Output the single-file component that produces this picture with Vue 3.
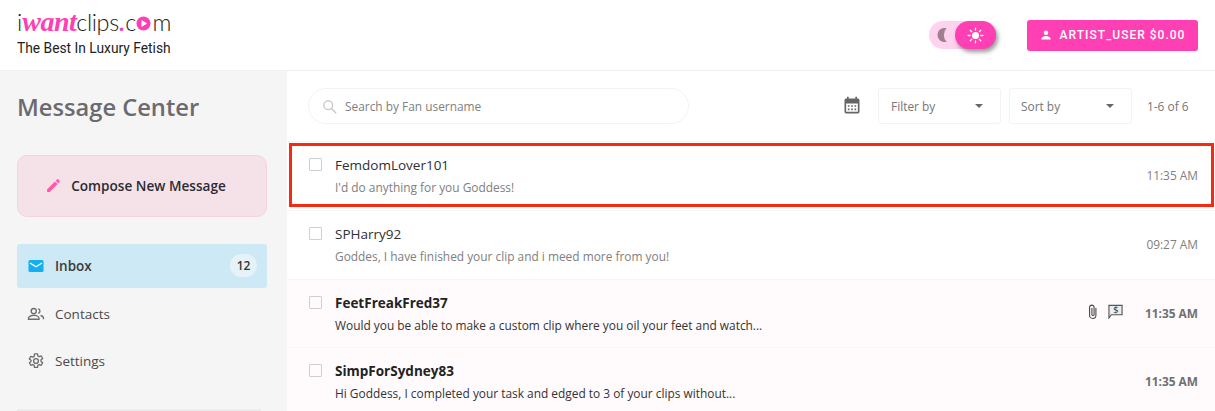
<script setup>
const messages = [
  { id: 1, name: 'FemdomLover101', text: "I'd do anything for you Goddess!", time: '11:35 AM', marked: true },
  { id: 2, name: 'SPHarry92', text: 'Goddes, I have finished your clip and i meed more from you!', time: '09:27 AM' },
  { id: 3, name: 'FeetFreakFred37', text: 'Would you be able to make a custom clip where you oil your feet and watch...', time: '11:35 AM', unread: true, extras: true },
  { id: 4, name: 'SimpForSydney83', text: 'Hi Goddess, I completed your task and edged to 3 of your clips without...', time: '11:35 AM', unread: true }
]
</script>

<template>
  <div class="page">
    <header class="topbar">
      <div class="brand">
        <div class="logo">
          <span>i</span><span class="logo-want">want</span><span class="logo-clips">clips</span><span class="logo-dot">.</span><span>c</span>
          <svg class="logo-o" viewBox="0 0 16 16" width="15" height="15">
            <circle cx="8" cy="8" r="7.5" fill="#ff3fb4" />
            <path d="M5.8 4.2 12 8l-6.2 3.8z" fill="#fff" />
          </svg>
          <span>m</span>
        </div>
        <div class="tagline">The Best In Luxury Fetish</div>
      </div>

      <div class="top-actions">
        <div class="theme-toggle">
          <svg class="moon" viewBox="0 0 24 24" width="16" height="16">
            <path d="M16 2A10.500 10.500 0 1 0 16 22 14 14 0 0 1 16 2z" fill="#a08090" />
          </svg>
          <div class="theme-knob">
            <svg viewBox="0 0 24 24" width="17" height="17" fill="none" stroke="#fff" stroke-width="1.800" stroke-linecap="round">
              <circle cx="12" cy="12" r="5" fill="#fff" stroke="none" />
              <path d="M12 1.500v3M12 19.500v3M1.500 12h3M19.500 12h3M4.600 4.600l2 2M17.400 17.400l2 2M4.600 19.400l2-2M17.400 6.600l2-2" />
            </svg>
          </div>
        </div>
        <button class="account-btn">
          <svg viewBox="0 0 24 24" width="12" height="12" fill="#fff">
            <path d="M12 12a4.500 4.500 0 1 0 0-9 4.500 4.500 0 0 0 0 9zm0 2.200c-3.400 0-9 1.700-9 5V21h18v-1.800c0-3.300-5.600-5-9-5z" />
          </svg>
          ARTIST_USER $0.00
        </button>
      </div>
    </header>

    <div class="body">
      <aside class="sidebar">
        <h1 class="title">Message Center</h1>

        <button class="compose">
          <svg viewBox="0 0 24 24" width="17" height="17" fill="#ff5aa9">
            <path d="M3 17.250V21h3.750L17.810 9.940l-3.750-3.750L3 17.250zM20.710 7.040a1 1 0 0 0 0-1.410l-2.340-2.340a1 1 0 0 0-1.410 0l-1.830 1.830 3.750 3.750 1.830-1.830z" />
          </svg>
          Compose New Message
        </button>

        <nav class="nav">
          <a class="nav-item active">
            <svg viewBox="0 0 24 24" width="18" height="18">
              <rect x="2" y="4" width="20" height="16" rx="2" fill="#12b0ee" />
              <path d="M4 8l8 5 8-5" fill="none" stroke="#fff" stroke-width="1.800" />
            </svg>
            <span>Inbox</span>
            <span class="count">12</span>
          </a>
          <a class="nav-item">
            <svg viewBox="0 0 24 24" width="18" height="18" fill="none" stroke="#6e6e6e" stroke-width="1.800">
              <circle cx="9" cy="8" r="3.400" />
              <path d="M2 19v-1.500c0-2.400 4-3.800 7-3.800s7 1.400 7 3.800V19z" />
              <path d="M15 4.800a3.400 3.400 0 0 1 0 6.400M18 14c2 .5 4 1.700 4 3.500V19" />
            </svg>
            <span>Contacts</span>
          </a>
          <a class="nav-item">
            <svg viewBox="0 0 24 24" width="18" height="18" fill="none" stroke="#6e6e6e" stroke-width="1.800" stroke-linejoin="round">
              <circle cx="12" cy="12" r="3.200" />
              <path d="M10 2.500h4l.5 2.800 1.700 1 2.700-1 2 3.400-2.200 1.800v2l2.200 1.800-2 3.400-2.700-1-1.700 1-.5 2.800h-4l-.5-2.800-1.700-1-2.700 1-2-3.400L5.300 13v-2L3.100 9.200l2-3.400 2.700 1 1.700-1z" />
            </svg>
            <span>Settings</span>
          </a>
        </nav>
        <div class="sidebar-rule"></div>
      </aside>

      <main class="main">
        <div class="toolbar">
          <label class="search">
            <svg viewBox="0 0 24 24" width="15" height="15" fill="none" stroke="#c4c4c4" stroke-width="2" stroke-linecap="round">
              <circle cx="10" cy="10" r="7" />
              <path d="M15.500 15.500 22 22" />
            </svg>
            <input type="text" placeholder="Search by Fan username" />
          </label>

          <svg class="calendar" viewBox="0 0 24 24" width="20" height="20" fill="#666">
            <path d="M19 3h-1V1h-2v2H8V1H6v2H5a2 2 0 0 0-2 2v14a2 2 0 0 0 2 2h14a2 2 0 0 0 2-2V5a2 2 0 0 0-2-2zm0 16H5V9h14v10zM7 11h2v2H7zm4 0h2v2h-2zm4 0h2v2h-2zm-8 4h2v2H7zm4 0h2v2h-2zm4 0h2v2h-2z" />
          </svg>

          <div class="select filter">Filter by<span class="caret"></span></div>
          <div class="select sort">Sort by<span class="caret"></span></div>
          <div class="paging">1-6 of 6</div>
        </div>

        <div class="list">
          <div
            v-for="m in messages"
            :key="m.id"
            class="row"
            :class="{ unread: m.unread, marked: m.marked }"
          >
            <span class="check"></span>
            <div class="row-text">
              <div class="row-name">{{ m.name }}</div>
              <div class="row-msg">{{ m.text }}</div>
            </div>
            <div v-if="m.extras" class="row-icons">
              <svg viewBox="0 0 12 18" width="10" height="15" fill="none" stroke="#444" stroke-width="1.300" stroke-linecap="round">
                <path d="M9.500 5v8.500a3.800 3.800 0 0 1-7.600 0V4a2.700 2.700 0 0 1 5.400 0v8.500a1.300 1.300 0 0 1-2.600 0V5" />
              </svg>
              <svg viewBox="0 0 16 16" width="15" height="15" fill="#eee" stroke="#555" stroke-width="1.200">
                <path d="M1 1.500h14v10H3.500L1 15z" />
                <text x="8.500" y="10" text-anchor="middle" class="dollar">$</text>
              </svg>
            </div>
            <div class="row-time">{{ m.time }}</div>
          </div>
        </div>
      </main>
    </div>
  </div>
</template>

<style scoped>
.page {
  width: 1215px;
  height: 411px;
  overflow: hidden;
  background: #fff;
  font-family: 'Open Sans', sans-serif;
  color: #333;
}

.topbar {
  height: 71px;
  box-sizing: border-box;
  border-bottom: 1px solid #f0f0f0;
  padding: 0 17px;
  display: flex;
  align-items: center;
  justify-content: space-between;
}

.brand {
  margin-bottom: 7px;
}

.logo {
  display: flex;
  align-items: center;
  height: 30px;
  font-family: Lato, sans-serif;
  font-weight: 300;
  font-size: 23.500px;
  line-height: 30px;
  color: #222;
}

.logo-want {
  font-family: 'Liberation Serif', serif;
  font-style: italic;
  font-weight: 700;
  font-size: 28px;
  color: #ff3fb4;
  letter-spacing: -0.5px;
}

.logo-clips {
  letter-spacing: -0.4px;
}

.logo-dot {
  color: #ff3fb4;
  font-weight: 700;
  margin-right: 1px;
}

.logo-o {
  margin: 3px 1px 0 0;
}

.tagline {
  font-family: Roboto, sans-serif;
  font-size: 13.800px;
  line-height: 18px;
  color: #222;
  margin-top: 2px;
}

.top-actions {
  display: flex;
  align-items: center;
  gap: 31px;
}

.theme-toggle {
  width: 67px;
  height: 28px;
  border-radius: 14px;
  background: #ffd2ee;
  display: flex;
  align-items: center;
  justify-content: space-between;
  padding-left: 7px;
  box-sizing: border-box;
}

.theme-knob {
  width: 41px;
  height: 28px;
  border-radius: 14px;
  background: #ff3fb4;
  display: flex;
  align-items: center;
  justify-content: center;
  box-shadow: 2px 3px 4px rgba(70, 70, 70, 0.55);
}

.account-btn {
  width: 171px;
  height: 31px;
  border: none;
  border-radius: 3px;
  background: #ff3fb4;
  color: #fff;
  font-family: Roboto, sans-serif;
  font-size: 12px;
  font-weight: 500;
  letter-spacing: 1px;
  display: flex;
  align-items: center;
  justify-content: center;
  gap: 8px;
  padding: 0;
}

.body {
  display: flex;
  height: 340px;
}

.sidebar {
  width: 287px;
  flex-shrink: 0;
  box-sizing: border-box;
  background: #f5f5f5;
  padding: 0 20px 0 17px;
}

.title {
  margin: 20px 0 0;
  font-size: 23.700px;
  line-height: 32px;
  font-weight: 600;
  color: #6b6b6f;
}

.compose {
  width: 100%;
  height: 62px;
  margin-top: 32px;
  border: 1px solid #f7d3de;
  border-radius: 10px;
  background: #f5e2e9;
  color: #2b2b33;
  font-family: 'Open Sans', sans-serif;
  font-size: 13.600px;
  font-weight: 600;
  display: flex;
  align-items: center;
  justify-content: center;
  gap: 9px;
  padding: 0 13px 2px 0;
}

.nav {
  margin-top: 27px;
  display: flex;
  flex-direction: column;
}

.nav-item {
  height: 47px;
  display: flex;
  align-items: center;
  gap: 10px;
  padding: 0 10px;
  font-size: 13.500px;
  color: #4a4a4a;
}

.nav-item.active {
  height: 44px;
  margin-bottom: 2px;
  padding-bottom: 1px;
  box-sizing: border-box;
  background: #cde9f5;
  border-radius: 3px;
  font-weight: 600;
  color: #3a3a3a;
}

.count {
  margin-left: auto;
  width: 27px;
  height: 23px;
  border-radius: 12px;
  background: #e5f3f9;
  color: #333;
  font-size: 12px;
  display: flex;
  align-items: center;
  justify-content: center;
}

.sidebar-rule {
  height: 3px;
  margin: 25px 6px 0 0;
  background: #ececec;
}

.main {
  flex: 1;
  min-width: 0;
}

.toolbar {
  height: 70.300px;
  box-sizing: border-box;
  display: flex;
  align-items: center;
  padding-left: 21px;
}

.search {
  width: 381px;
  height: 36px;
  box-sizing: border-box;
  border: 1px solid #f3f3f3;
  border-radius: 18px;
  padding-left: 13px;
  display: flex;
  align-items: center;
  gap: 6px;
}

.search input {
  flex: 1;
  min-width: 0;
  border: none;
  outline: none;
  background: none;
  font-family: 'Open Sans', sans-serif;
  font-size: 11.900px;
}

.search input::placeholder {
  color: #808080;
  opacity: 1;
}

.calendar {
  margin-left: 153px;
}

.select {
  height: 36px;
  box-sizing: border-box;
  border: 1px solid #f3f3f3;
  border-radius: 3px;
  padding: 0 17px 0 12px;
  font-size: 11.900px;
  color: #767676;
  display: flex;
  align-items: center;
  justify-content: space-between;
}

.filter {
  width: 123px;
  margin-left: 16px;
}

.sort {
  width: 123px;
  margin-left: 8px;
  padding-left: 11px;
}

.caret {
  width: 0;
  height: 0;
  border-left: 4px solid transparent;
  border-right: 4px solid transparent;
  border-top: 4px solid #666;
}

.paging {
  margin-left: 15px;
  font-size: 11.900px;
  color: #767676;
}

.list {
  border-top: 1px solid #f5f5f5;
}

.row {
  height: 68.670px;
  box-sizing: border-box;
  border-bottom: 1px solid #f6f6f6;
  padding: 14px 17px 0 22px;
  display: flex;
  align-items: flex-start;
  position: relative;
}

.row.unread {
  background: #fffbfd;
}

/* cadre rouge par-dessus la première ligne */
.row.marked::after {
  content: '';
  position: absolute;
  left: 2px;
  right: 1px;
  top: 1px;
  height: 64px;
  box-sizing: border-box;
  border: 3px solid #f52a12;
}

.check {
  width: 11px;
  height: 11px;
  border: 1px solid #cfcfcf;
  border-radius: 1px;
  margin-top: 2px;
  flex-shrink: 0;
}

.row-text {
  margin-left: 13px;
  flex: 1;
  min-width: 0;
}

.row-name {
  font-size: 13.500px;
  line-height: 19px;
  color: #2f2f2f;
}

.row-msg {
  margin-top: 4px;
  font-size: 11.900px;
  line-height: 16px;
  color: #808080;
}

.row.unread .row-name {
  font-weight: 700;
  color: #222;
}

.row.unread .row-msg {
  color: #333;
}

.row-icons {
  display: flex;
  gap: 10px;
  margin: 10px 22px 0 0;
  height: 16px;
}

.dollar {
  font-family: 'Open Sans', sans-serif;
  font-size: 10px;
  fill: #333;
  stroke: none;
}

.row-time {
  margin-top: 11px;
  font-size: 11.900px;
  line-height: 16px;
  color: #808080;
}

.row.unread .row-time {
  font-weight: 700;
  color: #707070;
}
</style>
